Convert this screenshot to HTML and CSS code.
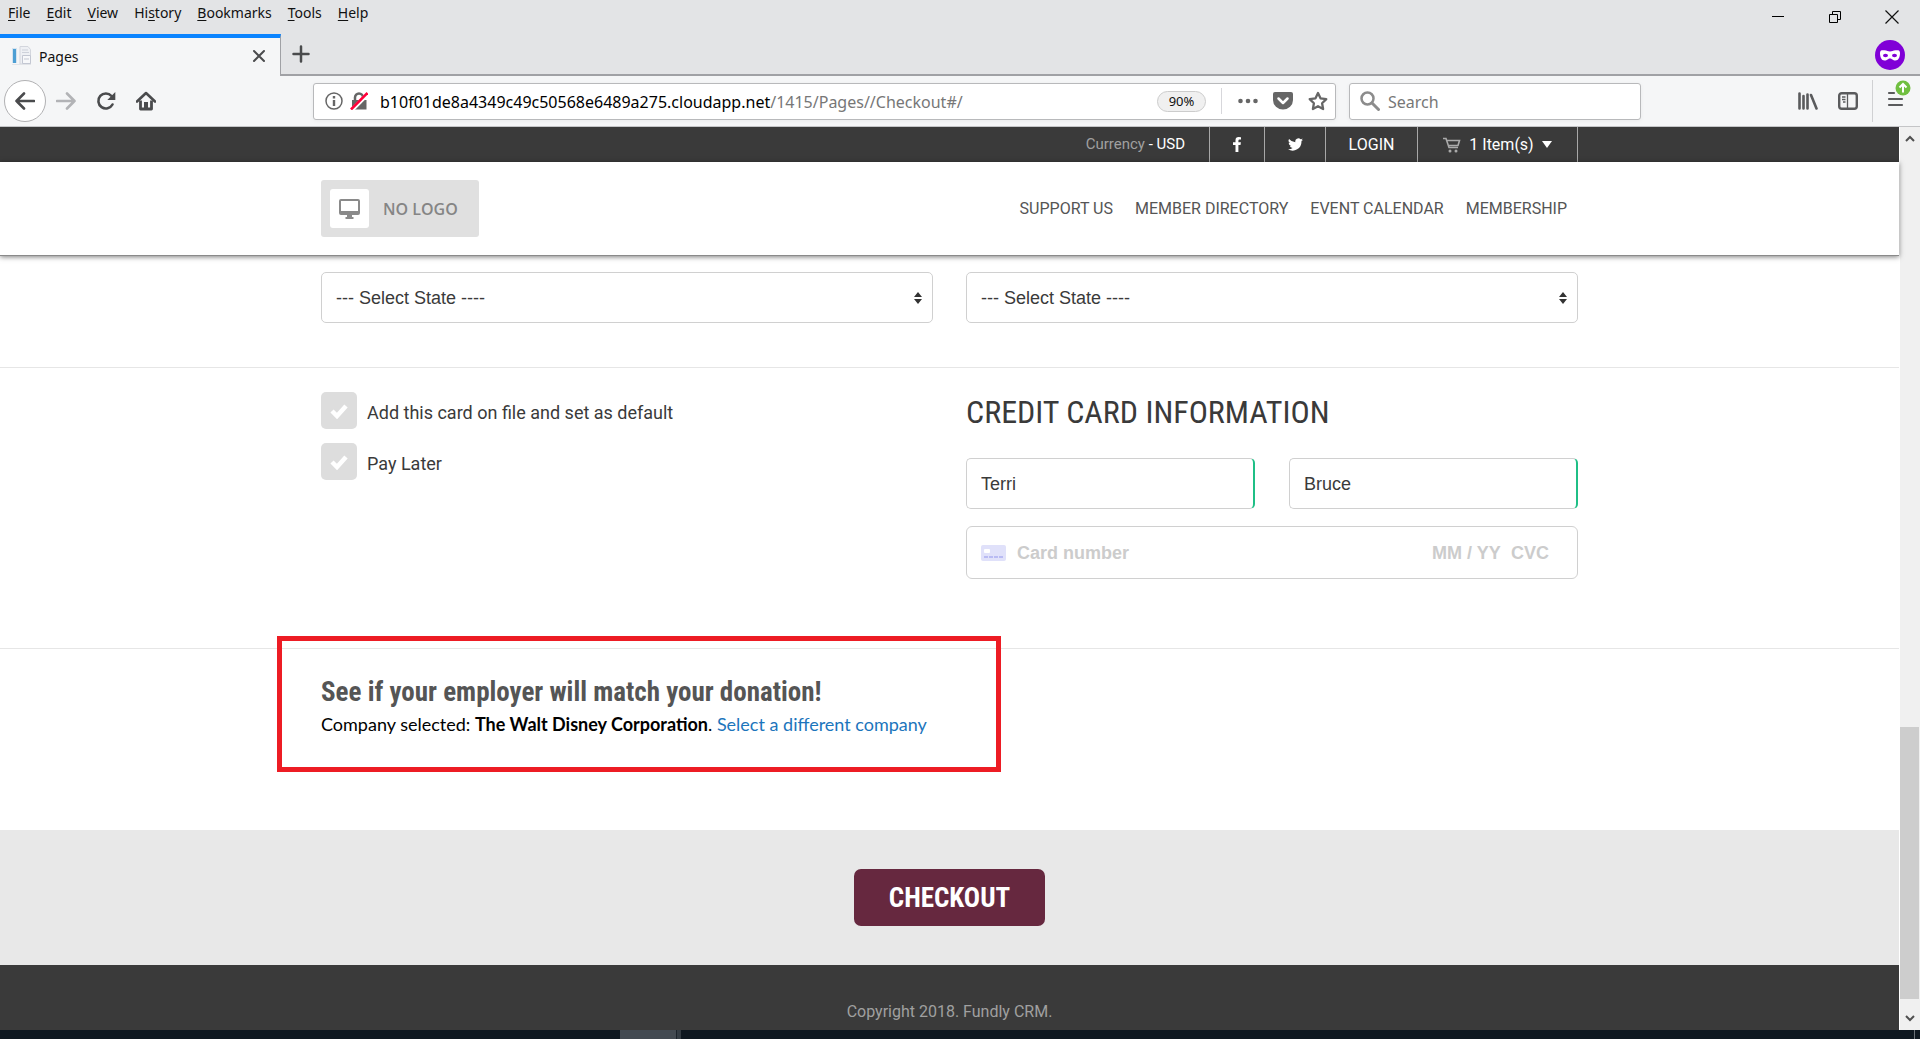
FILE: index.html
```html
<!DOCTYPE html>
<html lang="en">
<head>
<meta charset="utf-8">
<title>Pages</title>
<link rel="stylesheet" href="styles.css">
</head>
<body>
<header class="chrome">
  <div class="titlebar">
    <nav class="menus">
      <a href="#"><u>F</u>ile</a><a href="#"><u>E</u>dit</a><a href="#"><u>V</u>iew</a><a href="#">Hi<u>s</u>tory</a><a href="#"><u>B</u>ookmarks</a><a href="#"><u>T</u>ools</a><a href="#"><u>H</u>elp</a>
    </nav>
    <div class="window-buttons">
      <button aria-label="Minimize"><svg width="14" height="14"><path d="M1 6.5h12" stroke="#000" fill="none"/></svg></button>
      <button aria-label="Restore"><svg width="14" height="14" fill="none" stroke="#000"><path d="M1.500 4.500h8v8h-8zM4.500 4.500v-3h8v8h-3"/></svg></button>
      <button aria-label="Close"><svg width="14" height="14" stroke="#111" stroke-width="1.200"><path d="M.5.500l13 13M13.500.500l-13 13"/></svg></button>
    </div>
  </div>
  <div class="tabstrip">
    <div class="tab">
      <svg width="20" height="20"><path d="M0 2h5v15H0z" fill="#d5e3ef"/><path d="M1 3h3v14H1z" fill="#4d9fd4"/><path d="M8 .500h8l2.500 3V18H8z" fill="#eef0f4" stroke="#d3d6dd"/><path d="M10 4h6M10 6.500h7" stroke="#cdd1da"/><path d="M10.500 9.500h8v8h-8z" fill="#f7f8fa" stroke="#c3c7d2"/><path d="M12 13h5" stroke="#c3c7d2"/><path d="M0 18.500h19" stroke="#e2e4e8"/></svg>
      <span class="tab-title">Pages</span>
      <button aria-label="Close tab"><svg width="14" height="14" stroke="#4a4b4d" stroke-width="2" stroke-linecap="round"><path d="M2 2l10 10M12 2L2 12"/></svg></button>
    </div>
    <button class="new-tab" aria-label="New tab"><svg width="18" height="18" stroke="#4a4b4d" stroke-width="2.500" stroke-linecap="round"><path d="M9 1.500v15M1.500 9h15"/></svg></button>
    <svg class="private" width="30" height="30"><circle cx="15" cy="15" r="15" fill="#8000d7"/><path fill="#fff" d="M5 13c0-3 2-3 4.500-2.700C12 10.500 13 11.500 15 11.500s3-1 5.500-1.200C23 10 25 10 25 13c0 4-1.500 7.500-4.500 7.500S17 18.500 15 18.500 12.500 20.500 9.500 20.500 5 17 5 13z"/><ellipse cx="10.500" cy="15.500" rx="2.500" ry="1.700" fill="#8000d7"/><ellipse cx="19.500" cy="15.500" rx="2.500" ry="1.700" fill="#8000d7"/></svg>
  </div>
  <div class="toolbar">
    <div class="nav-buttons">
      <button class="back" aria-label="Back"><svg width="20" height="20" fill="none" stroke="#4a4b4d" stroke-width="2.600" stroke-linecap="round" stroke-linejoin="round"><path d="M19 10H1.500M9 2.500L1.500 10 9 17.500"/></svg></button>
      <button aria-label="Forward"><svg width="20" height="20" fill="none" stroke="#b2b3b6" stroke-width="2.600" stroke-linecap="round" stroke-linejoin="round"><path d="M1 10h17.500M11 2.500l7.500 7.500-7.500 7.500"/></svg></button>
      <button aria-label="Reload"><svg width="20" height="20" fill="none" stroke="#4a4b4d" stroke-width="2.600" stroke-linecap="round"><path d="M16.500 13.500A7.500 7.500 0 1 1 15.500 5"/><path d="M19.300 1v8h-8z" fill="#4a4b4d" stroke="none"/></svg></button>
      <button aria-label="Home"><svg width="20" height="20"><path d="M1 10.500L10 2l9 8.500" fill="none" stroke="#4a4b4d" stroke-width="2.600" stroke-linecap="round" stroke-linejoin="round"/><path d="M4.500 9.500v8.500h11V9.500" fill="none" stroke="#4a4b4d" stroke-width="2.800" stroke-linejoin="round"/><path d="M8 11h4v6H8z" fill="#4a4b4d"/></svg></button>
    </div>
    <div class="urlbar">
      <svg width="18" height="18"><circle cx="9" cy="9" r="8" fill="none" stroke="#666" stroke-width="1.500"/><path d="M9 4v2.500M9 8v6" stroke="#666" stroke-width="2.400"/></svg>
      <svg class="lock" width="18" height="18"><path d="M5 9V5.500a4 4 0 0 1 8 0V9" fill="none" stroke="#666" stroke-width="2.500"/><path d="M2 8h14.500v9.500H2z" fill="#666"/><path d="M1.500 18.500L18.500 1.500" stroke="#fff" stroke-width="4"/><path d="M1 17.500L17.500 1" stroke="#ff0039" stroke-width="2.600"/></svg>
      <span class="address">b10f01de8a4349c49c50568e6489a275.cloudapp.net<span class="path">/1415/Pages//Checkout#/</span></span>
      <button class="zoom-level">90%</button>
      <span class="url-sep"></span>
      <div class="page-actions">
        <button aria-label="Page actions"><svg width="20" height="20" fill="#666"><circle cx="2.500" cy="10" r="2.300"/><circle cx="10" cy="10" r="2.300"/><circle cx="17.500" cy="10" r="2.300"/></svg></button>
        <button aria-label="Save to Pocket"><svg width="20" height="20"><path d="M2 1h16q2 0 2 2v6a10 9.500 0 0 1-20 0V3q0-2 2-2z" fill="#666"/><path d="M5.500 7.500L10 12l4.500-4.500" fill="none" stroke="#fff" stroke-width="2.500" stroke-linecap="round" stroke-linejoin="round"/></svg></button>
        <button aria-label="Bookmark"><svg width="20" height="20"><path d="M10 2l2.500 5.300 5.800.800-4.200 4.100 1 5.800L10 15.200 4.900 18l1-5.800L1.700 8.100l5.800-.8z" fill="none" stroke="#666" stroke-width="2.300" stroke-linejoin="round"/></svg></button>
      </div>
    </div>
    <label class="searchbar">
      <svg width="20" height="20" fill="none" stroke="#8c8c8c"><circle cx="7.500" cy="7.500" r="6" stroke-width="2.500"/><path d="M12 12l6.500 6.500" stroke-width="3" stroke-linecap="round"/></svg>
      <input type="search" placeholder="Search" aria-label="Search">
    </label>
    <div class="tools">
      <button aria-label="Library"><svg width="20" height="20" fill="none" stroke="#5a5b5d" stroke-width="2.600" stroke-linecap="round"><path d="M1.500 2.500v15M5.500 5v12.500M9.500 3.500v14M13 4l5.500 13.500"/></svg></button>
      <button aria-label="Sidebars"><svg width="20" height="20" fill="none" stroke="#5a5b5d"><rect x="1.200" y="2.200" width="17.600" height="15.600" rx="2.500" stroke-width="2.400"/><path d="M9.500 2v16M4 6h3.500M4 8.500h3.500M5 11h2.500" stroke-width="1.300"/></svg></button>
      <span class="tool-sep"></span>
      <button class="app-menu" aria-label="Open menu"><svg width="24" height="28"><path d="M2 13h5M2 19h13M2 25h13" stroke="#5a5b5d" stroke-width="2.200" stroke-linecap="round"/><circle cx="16" cy="8" r="7.500" fill="#70bf40"/><path d="M16 12.500V4M12.500 7.500L16 4l3.500 3.500" fill="none" stroke="#fff" stroke-width="2"/></svg></button>
    </div>
  </div>
</header>

<div class="viewport">
  <div class="page">
    <div class="topbar">
      <div class="container topbar-row">
        <span class="currency">Currency <a href="#">- USD</a></span>
        <a class="cell social-f" href="#" aria-label="Facebook"><svg width="8" height="15"><path d="M8 .200V2.600H6.500Q5.400 2.600 5.400 3.700V5.300H7.900L7.500 7.900H5.400V15H2.500V7.900H0V5.300H2.500V3.200Q2.500 0 5.700 0z" fill="#fff"/></svg></a>
        <a class="cell social-t" href="#" aria-label="Twitter"><svg width="15" height="13" viewBox="0 0 24 20"><path fill="#fff" d="M24 2.400a10 10 0 0 1-2.800.8A5 5 0 0 0 23.300.500a10 10 0 0 1-3.100 1.200 4.900 4.900 0 0 0-8.400 4.500A14 14 0 0 1 1.700 1a4.900 4.900 0 0 0 1.500 6.600A5 5 0 0 1 1 7v.1a4.900 4.900 0 0 0 3.900 4.800 5 5 0 0 1-2.200.1 4.900 4.900 0 0 0 4.600 3.400A10 10 0 0 1 0 17.500 14 14 0 0 0 21.500 4.900 10 10 0 0 0 24 2.400z"/></svg></a>
        <a class="cell login" href="#">LOGIN</a>
        <button class="cell cart"><svg width="18" height="16" fill="none" stroke="#aaa" stroke-width="1.600"><path d="M0 1.500h3l3 9h9M4 3.500h12.500L15 8.500H6"/><circle cx="7" cy="14" r="1.500" fill="#aaa" stroke="none"/><circle cx="13" cy="14" r="1.500" fill="#aaa" stroke="none"/></svg><span>1 Item(s)</span><svg width="10" height="7"><path d="M0 0h10L5 7z" fill="#fff"/></svg></button>
      </div>
    </div>
    <div class="site-header">
      <div class="container header-row">
        <a class="logo" href="#"><span class="logo-icon"><svg width="21" height="20"><path d="M2 0h17q2 0 2 2v12q0 2-2 2h-6v2h1.500v2h-8v-2H8v-2H2q-2 0-2-2V2q0-2 2-2zM2 2v10h17V2z" fill="#8a8a8a" fill-rule="evenodd"/></svg></span>NO LOGO</a>
        <nav class="site-nav"><a href="#">SUPPORT US</a><a href="#">MEMBER DIRECTORY</a><a href="#">EVENT CALENDAR</a><a href="#">MEMBERSHIP</a></nav>
      </div>
    </div>
    <form class="checkout">
      <section class="states">
        <div class="container columns">
          <div class="select"><select aria-label="Billing state"><option>--- Select State ----</option></select><svg width="8" height="12"><path d="M0 5l4-5 4 5zM0 7h8l-4 5z" fill="#333"/></svg></div>
          <div class="select"><select aria-label="Shipping state"><option>--- Select State ----</option></select><svg width="8" height="12"><path d="M0 5l4-5 4 5zM0 7h8l-4 5z" fill="#333"/></svg></div>
        </div>
      </section>
      <section class="payment">
        <div class="container columns">
          <div class="options">
            <label class="option"><span class="tick"><input type="checkbox"><svg width="18" height="16"><path d="M2 8l5 5 9-10" fill="none" stroke="#fff" stroke-width="4.500"/></svg></span><span>Add this card on file and set as default</span></label>
            <label class="option"><span class="tick"><input type="checkbox"><svg width="18" height="16"><path d="M2 8l5 5 9-10" fill="none" stroke="#fff" stroke-width="4.500"/></svg></span><span>Pay Later</span></label>
          </div>
          <div class="card">
            <h2>CREDIT CARD INFORMATION</h2>
            <div class="names">
              <input type="text" value="Terri" aria-label="First name">
              <input type="text" value="Bruce" aria-label="Last name">
            </div>
            <div class="card-field">
              <svg width="25" height="16"><rect width="25" height="16" rx="2" fill="#e0e1fa"/><rect x="3" y="4" width="6" height="4" rx="1" fill="#fff"/><path d="M3 12h20" stroke="#b9bbf3" stroke-width="2" stroke-dasharray="4 1"/></svg>
              <input class="number" type="text" placeholder="Card number" aria-label="Card number">
              <input class="expiry" type="text" placeholder="MM / YY" aria-label="Expiry date">
              <input class="cvc" type="text" placeholder="CVC" aria-label="CVC">
            </div>
          </div>
        </div>
      </section>
      <section class="employer">
        <div class="container employer-body">
          <h3>See if your employer will match your donation!</h3>
          <p>Company selected: <strong>The Walt Disney Corporation</strong>. <a href="#">Select a different company</a></p>
          <div class="highlight"></div>
        </div>
      </section>
      <div class="submit"><button type="submit">CHECKOUT</button></div>
    </form>
    <footer class="footer">Copyright 2018. Fundly CRM.</footer>
  </div>
  <div class="scrollbar">
    <svg width="10" height="7" fill="none" stroke="#505050" stroke-width="2"><path d="M1 6l4-4 4 4"/></svg>
    <div class="thumb"></div>
    <svg width="10" height="7" fill="none" stroke="#505050" stroke-width="2"><path d="M1 1l4 4 4-4"/></svg>
  </div>
</div>
<div class="taskbar"><span class="task"></span><span class="task-stack"></span><span class="clock">12:43 PM</span><span class="peek"></span></div>
</body>
</html>
```
FILE: styles.css
```css
* { box-sizing: border-box; }
body {
  margin: 0;
  min-height: 100vh;
  display: flex;
  flex-direction: column;
  background: #fff;
  font-family: Roboto, "Liberation Sans", sans-serif;
  color: #3a3a3a;
}
a { color: inherit; text-decoration: none; }
button { border: 0; padding: 0; margin: 0; background: none; font: inherit; color: inherit; }
svg { display: block; flex: none; }
h2, h3, p { margin: 0; }

/* Browser window */
.chrome {
  font-family: "Noto Sans", "Open Sans", sans-serif;
  font-size: 14px;
  color: #111;
  background: #e3e4e6;
}
.titlebar { display: flex; justify-content: space-between; height: 34px; }
.menus { display: flex; gap: 16px; padding: 2px 8px 0; line-height: 22px; }
.menus u { text-underline-offset: 2px; }
.window-buttons { display: flex; gap: 43px; padding: 10px 21px 0 0; align-items: flex-start; }
.tabstrip { display: flex; height: 42px; border-bottom: 2px solid #a0a1a5; }
.tab {
  display: flex;
  align-items: center;
  gap: 7px;
  width: 281px;
  height: 42px;
  padding: 0 14px 2px 12px;
  background: #f5f6f7;
  border-top: 4px solid #0a84ff;
  border-right: 1px solid #a0a1a5;
}
.tab-title { flex: 1; }
.new-tab { padding: 0 11px; }
.private { margin: 6px 15px 0 auto; }
.toolbar {
  display: flex;
  align-items: center;
  height: 51px;
  padding: 0 13px 0 4px;
  background: #f5f6f7;
  border-bottom: 1px solid #c4c5c7;
}
.nav-buttons { display: flex; align-items: center; gap: 20px; width: 309px; }
.back {
  display: grid;
  place-items: center;
  width: 42px;
  height: 42px;
  margin-right: -10px;
  border: 1px solid #b1b1b3;
  border-radius: 50%;
  background: #fff;
}
.urlbar, .searchbar {
  display: flex;
  align-items: center;
  height: 37px;
  border: 1px solid #b8b9bb;
  border-radius: 3px;
  background: #fff;
  box-shadow: 0 1px 4px #0000000d;
}
.urlbar { flex: 1; padding: 0 7px 0 11px; margin-right: 13px; }
.lock { margin: 0 12px 0 7px; }
.address { flex: 1; padding-top: 1px; font-size: 16px; white-space: nowrap; color: #000; }
.path { color: #777; }
.zoom-level {
  width: 49px;
  height: 21px;
  border: 1px solid #ccc;
  border-radius: 11px;
  background: #f0f0f0;
  font-size: 13px;
  line-height: 18px;
}
.url-sep { width: 1px; height: 26px; margin: 0 16px 0 15px; background: #d7d7db; }
.page-actions { display: flex; gap: 15px; }
.searchbar { width: 292px; gap: 8px; padding: 0 10px; }
.searchbar input {
  flex: 1;
  min-width: 0;
  padding: 1px 0 0;
  border: 0;
  outline: 0;
  font: 16px "Noto Sans", "Open Sans", sans-serif;
}
.searchbar input::placeholder { color: #777; }
.tools { display: flex; align-items: center; gap: 20px; margin-left: 157px; }
.tool-sep { width: 1px; height: 42px; margin: 0 -6px 0 -6px; background: #d0d1d3; }
.app-menu { margin: -14px -4px 0 0; }

/* Page */
.viewport { display: flex; flex: 1; }
.page { flex: 1; min-width: 0; display: flex; flex-direction: column; border-right: 1px solid #fff; }
.container { width: 100%; max-width: 1257px; margin: 0 auto; }
.topbar { height: 35px; background: #3a3a3a; color: #fff; font-size: 16px; }
.topbar-row { display: flex; justify-content: flex-end; align-items: stretch; height: 35px; line-height: 35px; }
.currency { padding-right: 24px; font-size: 15px; color: #a0a0a0; }
.currency a { color: #fff; }
.cell { display: flex; align-items: center; justify-content: center; border-left: 1px solid #a8a8a8; }
.social-f { width: 55px; }
.social-t { width: 61px; }
.login { width: 92px; }
.cart { width: 161px; gap: 8px; border-right: 1px solid #a8a8a8; }
.site-header {
  position: relative;
  height: 94px;
  background: #fff;
  border-bottom: 1px solid #8a8a8a;
  box-shadow: 0 1px 5px #00000080;
}
.header-row { display: flex; align-items: center; justify-content: space-between; height: 93px; }
.logo {
  display: flex;
  align-items: center;
  gap: 14px;
  width: 158px;
  height: 57px;
  padding-left: 9px;
  border-radius: 3px;
  background: #e0e0e0;
  color: #858585;
  font: 600 16px "Open Sans", "Noto Sans", sans-serif;
}
.logo-icon { display: grid; place-items: center; width: 39px; height: 39px; border-radius: 3px; background: #fff; }
.site-nav { display: flex; gap: 22px; padding-right: 11px; font-size: 16px; color: #555; }
.columns { display: grid; grid-template-columns: 1fr 1fr; gap: 33px; }
.states { padding: 16px 0 44px; border-bottom: 1px solid #e6e6e6; }
.select { position: relative; }
.select svg { position: absolute; right: 11px; top: 20px; }
.select select, .names input {
  appearance: none;
  display: block;
  width: 100%;
  height: 51px;
  padding: 0 14px;
  border: 1px solid #d0d0d0;
  border-radius: 5px;
  background: #fff;
  color: #3a3a3a;
  font: 18px "Liberation Sans", Arial, sans-serif;
}
.names input { padding-top: 2px; }
.payment { height: 281px; padding-top: 24px; border-bottom: 1px solid #e6e6e6; }
.options { display: flex; flex-direction: column; gap: 14px; }
.option { display: flex; gap: 10px; height: 37px; line-height: 42px; font-size: 18px; }
.tick { display: grid; place-items: center; width: 36px; height: 37px; border-radius: 5px; background: #ddd; }
.tick input { appearance: none; width: 36px; height: 37px; margin: 0; grid-area: 1 / 1; }
.tick svg { grid-area: 1 / 1; }
h2, h3, .submit button { font-family: "Roboto Condensed", Roboto, sans-serif; }
h2 { font-size: 32px; font-weight: 400; line-height: 41px; }
.names { display: grid; grid-template-columns: 1fr 1fr; gap: 34px; padding: 25px 0 17px; }
.names input { border-right: 2px solid #1fbf86; }
.card-field {
  display: flex;
  align-items: center;
  height: 53px;
  padding: 0 14px;
  border: 1px solid #d0d0d0;
  border-radius: 6px;
}
.card-field input {
  min-width: 0;
  padding: 2px 0 0;
  border: 0;
  outline: 0;
  font: bold 18px "Liberation Sans", Arial, sans-serif;
}
.card-field input::placeholder { color: #ccc; opacity: 1; }
.card-field .number { flex: 1; margin-left: 11px; }
.card-field .expiry { width: 79px; }
.card-field .cvc { width: 52px; }
.employer-body { position: relative; height: 181px; padding-top: 26px; }
h3 { font-size: 27px; font-weight: 700; line-height: 34px; color: #555; }
.employer p { font: 18px/30px Lato, sans-serif; color: #000; }
.employer p a { color: #1c75bc; }
.highlight { position: absolute; left: -44px; top: -13px; width: 724px; height: 136px; border: 5px solid #ed1c24; pointer-events: none; }
.submit { display: grid; place-items: center; height: 135px; background: #e8e8e8; }
.submit button { width: 191px; height: 57px; border-radius: 7px; background: #66283f; color: #fff; font-size: 27px; font-weight: 700; }
.footer { flex: 1; min-height: 65px; padding-top: 34px; background: #3a3a3a; color: #a0a0a0; font-size: 16px; line-height: 26px; text-align: center; }

.scrollbar { display: flex; flex-direction: column; align-items: center; justify-content: space-between; width: 20px; padding: 8px 0; background: #f0f0f0; }
.thumb { width: 19px; height: 272px; margin: auto 1px 16px 0; background: #cdcdcd; }
.taskbar { display: flex; height: 9px; overflow: hidden; background: #0f1820; }
.task { width: 56px; margin-left: 620px; background: #434a51; }
.task-stack { width: 5px; border-left: 1px solid #1c242b; background: #343c43; }
.clock { margin: 5px 77px 0 auto; color: #fff; font: 13px/16px "Noto Sans", sans-serif; }
.peek { width: 6px; border-left: 1px solid #6c7278; }
```
